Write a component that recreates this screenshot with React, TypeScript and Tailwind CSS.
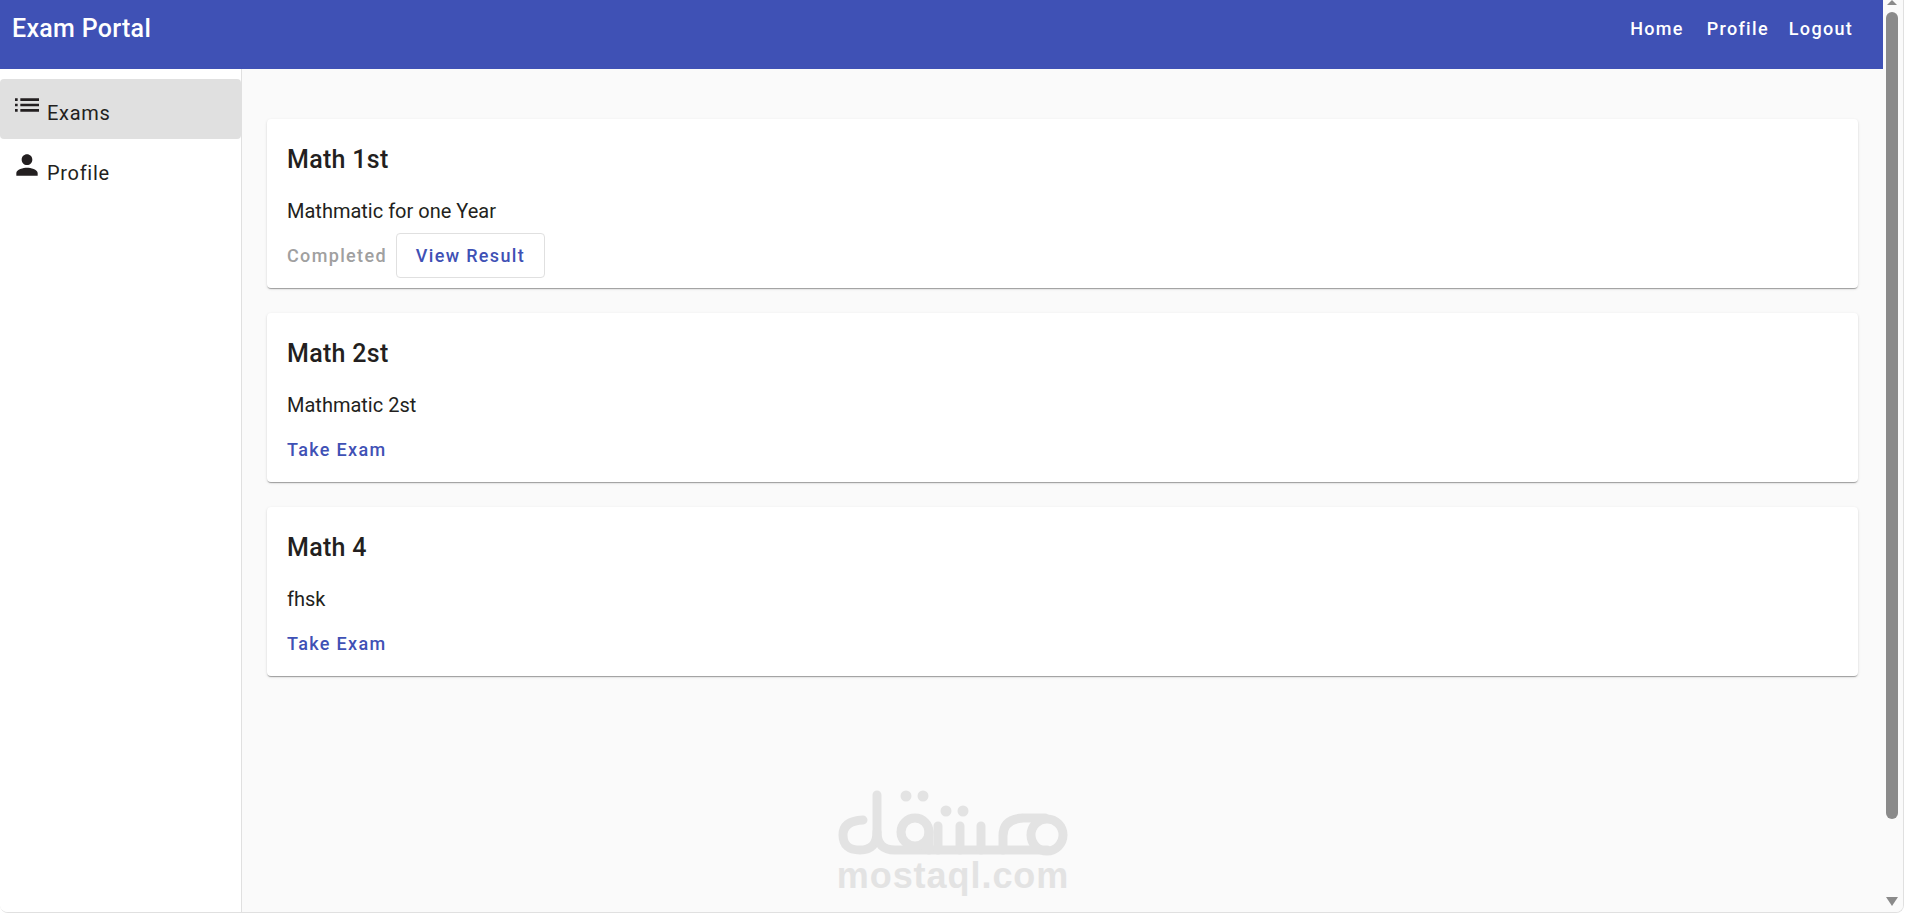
const font = "font-['Roboto',sans-serif]";

const exams = [
  { title: "Math 1st", desc: "Mathmatic for one Year", done: true },
  { title: "Math 2st", desc: "Mathmatic 2st", done: false },
  { title: "Math 4", desc: "fhsk", done: false },
];

function ListIcon() {
  return (
    <svg width="32" height="32" viewBox="0 0 24 24" className="fill-[#231f20] shrink-0">
      <path d="M3 13h2v-2H3v2zm0 4h2v-2H3v2zm0-8h2V7H3v2zm4 4h14v-2H7v2zm0 4h14v-2H7v2zM7 7v2h14V7H7z" />
    </svg>
  );
}

function PersonIcon() {
  return (
    <svg width="32" height="32" viewBox="0 0 24 24" className="fill-[#231f20] shrink-0">
      <path d="M12 12c2.21 0 4-1.79 4-4s-1.79-4-4-4-4 1.79-4 4 1.79 4 4 4zm0 2c-2.67 0-8 1.34-8 4v2h16v-2c0-2.66-5.33-4-8-4z" />
    </svg>
  );
}

function ExamCard({ title, desc, done }: { title: string; desc: string; done: boolean }) {
  return (
    <div className="h-[169px] bg-white rounded-[4px] px-[20px] pt-[21px] shadow-[0_2px_1px_-1px_rgba(0,0,0,0.2),0_1px_1px_0_rgba(0,0,0,0.14),0_1px_3px_0_rgba(0,0,0,0.12)]">
      <h2 className="text-[25px] leading-[40px] font-medium tracking-[0.3px] text-[#231f20]">{title}</h2>
      <p className="mt-[16px] text-[20px] leading-[30px] text-[#231f20]">{desc}</p>
      <div className="mt-[7px] flex items-center gap-[9px] h-[45px]">
        {done ? (
          <>
            <span className="text-[18px] font-[480] tracking-[1.35px] text-[#a0a0a0]">Completed</span>
            <button className="h-[45px] w-[149px] border border-[#e0e0e0] rounded-[4px] text-[18px] font-[480] tracking-[1.35px] text-[#3f51b5]">
              View Result
            </button>
          </>
        ) : (
          <button className="text-[18px] font-[480] tracking-[1.35px] text-[#3f51b5]">Take Exam</button>
        )}
      </div>
    </div>
  );
}

function Watermark() {
  return (
    <div className="absolute left-[838px] top-[790px] w-[230px] flex flex-col items-center pointer-events-none">
      <svg width="230" height="68" viewBox="0 0 230 68" fill="none" className="stroke-[#e3e3e3]" strokeWidth="9" strokeLinecap="round" strokeLinejoin="round">
        <path d="M25 30 Q5 31 5 45 Q5 60 22 60 Q39 60 39 42 V5" />
        <path d="M39 42 Q39 60 57 60 H209" />
        <circle cx="77" cy="42" r="14" />
        <path d="M91 42 V60" />
        <path d="M100 36 V60 M122 36 V60 M143 36 V60" />
        <circle cx="209" cy="45" r="16" />
        <path d="M165 60 V46 Q165 29 185 28 H207" />
        <g fill="#e3e3e3" stroke="none">
          <circle cx="68" cy="6" r="5.5" />
          <circle cx="85" cy="6" r="5.5" />
          <circle cx="108" cy="21" r="5.5" />
          <circle cx="125" cy="21" r="5.5" />
        </g>
      </svg>
      <span className="font-['Liberation_Sans',sans-serif] font-bold text-[36px] leading-[36px] tracking-[0.95px] text-[#e3e3e3]">mostaql.com</span>
    </div>
  );
}

export default function App() {
  return (
    <div className="h-[913px] w-[1906px] bg-white overflow-hidden">
      <div className={`${font} relative h-[913px] w-[1904px] overflow-hidden flex bg-[#fafafa] border-b border-r border-[#e0e0e0] rounded-b-[8px]`}>
        <div className="w-[1883px] flex flex-col">
          <header className="h-[69px] bg-[#3f51b5] flex items-start justify-between pl-[12px] pr-[30px] text-white">
            <span className="text-[25px] leading-[58px] font-medium tracking-[0.3px]">Exam Portal</span>
            <nav className="flex items-center h-[57px] text-[18px] font-medium tracking-[1.3px]">
              <span className="mr-[23px]">Home</span>
              <span className="mr-[20px]">Profile</span>
              <span>Logout</span>
            </nav>
          </header>
          <div className="flex-1 flex">
            <aside className="w-[242px] bg-white border-r border-[#e0e0e0] pt-[10px]">
              <div className="h-[60px] bg-[#e0e0e0] rounded-[4px] flex pl-[11px] pt-[10px] gap-[4px]">
                <ListIcon />
                <span className="text-[20px] leading-[30px] mt-[9px] tracking-[0.7px] text-[#231f20]">Exams</span>
              </div>
              <div className="h-[60px] flex pl-[11px] pt-[10px] gap-[4px]">
                <PersonIcon />
                <span className="text-[20px] leading-[30px] mt-[9px] tracking-[0.7px] text-[#231f20]">Profile</span>
              </div>
            </aside>
            <main className="flex-1 pt-[50px] pl-[25px] pr-[25px] flex flex-col gap-[25px]">
              {exams.map((e) => (
                <ExamCard key={e.title} {...e} />
              ))}
            </main>
          </div>
        </div>
        <div className="flex-1 flex flex-col items-start pl-[3px] bg-[#fafafa]">
          <div className="w-0 h-0 ml-[1px] border-x-[5.5px] border-x-transparent border-b-[5px] border-b-[#8a8a8a]" />
          <div className="w-[12px] h-[807px] mt-[7px] rounded-[6px] bg-[#8a8a8a]" />
          <div className="w-0 h-0 mt-[78px] border-x-[6px] border-x-transparent border-t-[9px] border-t-[#8a8a8a]" />
        </div>
        <Watermark />
      </div>
    </div>
  );
}
